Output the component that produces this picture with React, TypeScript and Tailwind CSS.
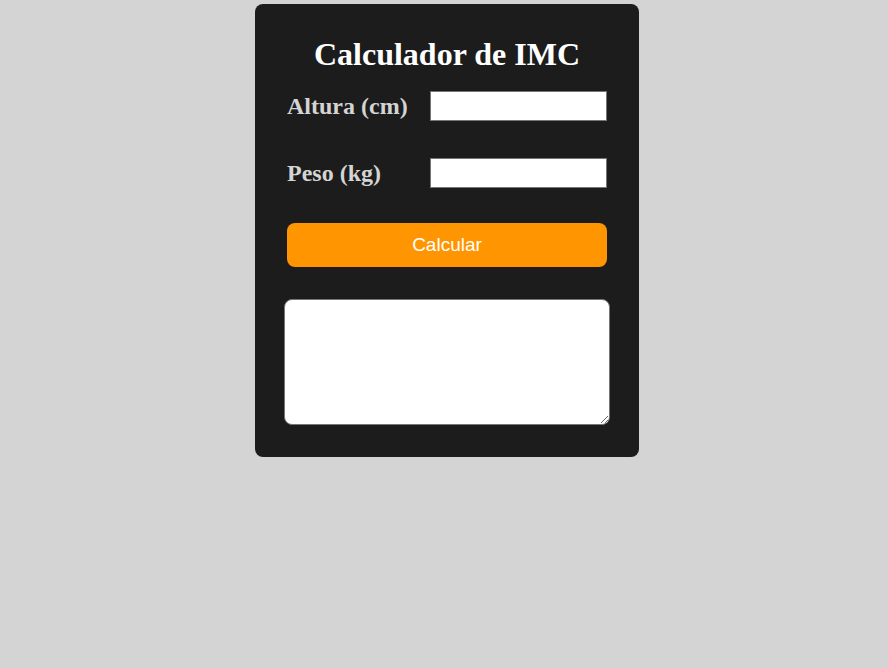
export default function App() {
  return (
    <div className="min-h-screen bg-[#d4d4d4] py-1 pr-1 pl-2.5 font-['Liberation_Serif',serif]">
      <main className="mx-auto w-full max-w-96 rounded-lg bg-[#1c1c1c] p-8">
        <h1 className="text-center text-[32px] leading-9 font-bold text-white">Calculador de IMC</h1>
        <form className="mt-[19px]" onSubmit={(e) => e.preventDefault()}>
          <div className="flex items-center justify-between">
            <label htmlFor="altura" className="text-2xl leading-[30px] font-bold text-[#d4d4d4]">
              Altura (cm)
            </label>
            <input id="altura" type="text" className="h-[30px] w-[177px] border border-[#767676] bg-white px-0.5 text-black" />
          </div>
          <div className="mt-[37px] flex items-center justify-between">
            <label htmlFor="peso" className="text-2xl leading-[30px] font-bold text-[#d4d4d4]">
              Peso (kg)
            </label>
            <input id="peso" type="text" className="h-[30px] w-[177px] border border-[#767676] bg-white px-0.5 text-black" />
          </div>
          <button type="submit" className="mt-[35px] block h-11 w-full rounded-lg bg-[#ff9500] font-['Liberation_Sans',sans-serif] text-[19px] text-white">
            Calcular
          </button>
          <textarea aria-label="Resultado" className="-mx-[3px] mt-8 block h-[126px] w-[calc(100%+6px)] resize rounded-lg border border-[#767676] bg-white p-0.5 text-black" />
        </form>
      </main>
    </div>
  );
}
